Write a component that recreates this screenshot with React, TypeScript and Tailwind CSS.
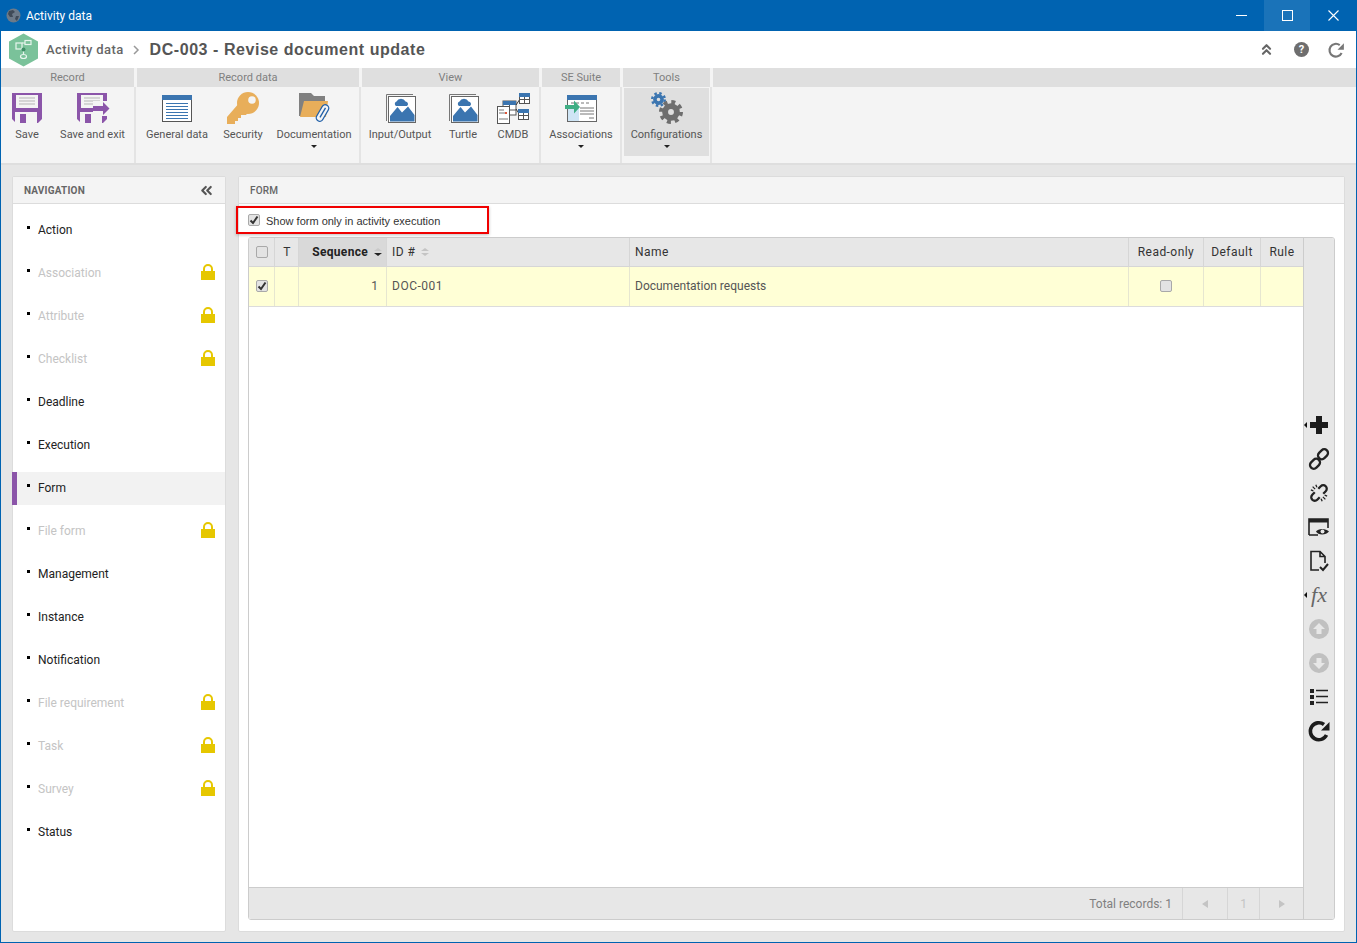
import { ChevronsLeft, ChevronsUp } from "lucide-react";
import type { ReactNode } from "react";

function SaveIcon({ exit }: { exit?: boolean }) {
  return (
    <svg width={exit ? 34 : 30} height="32" viewBox={exit ? "0 0 34 32" : "1 0 30 32"} className="block">
      <path d="M1 1H31V27L27 31H5L1 27Z" fill="#8b55a9" />
      <rect x="5" y="3" width="22" height="13" fill="#f4f4f4" />
      <path d="M8 6H24M8 9H24M8 12H24" stroke="#b5b5b5" strokeWidth="1" />
      <rect x="4" y="20" width="22" height="11" fill="#f4f4f4" />
      <rect x="9" y="22" width="6" height="9" fill="#8b55a9" />
      {exit && (
        <>
          <rect x="17" y="9" width="17" height="15" fill="#f4f4f4" />
          <path d="M17 14H27V10L33.500 16.500L27 23V19H17Z" fill="#8b55a9" />
        </>
      )}
    </svg>
  );
}

function GeneralIcon() {
  return (
    <svg width="32" height="32" viewBox="0 0 32 32" className="block">
      <rect x="1.500" y="3.500" width="29" height="26" fill="#fff" stroke="#555" />
      <rect x="1" y="3" width="30" height="5" fill="#3b75b0" />
      <path d="M5 11.500H27M5 14.500H27M5 17.500H27M5 20.500H27M5 23.500H27M5 26.500H27" stroke="#3b75b0" strokeWidth="1.200" />
    </svg>
  );
}

function KeyIcon() {
  return (
    <svg width="36" height="34" viewBox="0 0 36 34" className="block">
      <circle cx="23" cy="12" r="11" fill="#e8ae5a" />
      <path d="M15 11L2 26V33H10V30H13V27H16V24H21L24 20Z" fill="#e8ae5a" />
      <circle cx="27" cy="9" r="3.800" fill="#f4f4f4" />
    </svg>
  );
}

function DocIcon() {
  return (
    <svg width="34" height="32" viewBox="0 0 34 32" className="block">
      <path d="M2 1H14L17 4H28V9H8L4 24H2Z" fill="#808080" />
      <path d="M7 9H31L29 25H3Z" fill="#e8ae5a" />
      <g transform="rotate(30 25.500 21)" fill="#f4f4f4" stroke="#1f5fa8" strokeWidth="1.300">
        <rect x="22" y="12" width="7" height="18" rx="3.500" />
        <path d="M25.500 15V26" fill="none" />
      </g>
    </svg>
  );
}

function PictureIcon() {
  return (
    <svg width="34" height="32" viewBox="0 0 34 32" className="block">
      <path d="M3.500 29V2.500H30" fill="none" stroke="#777" />
      <rect x="5.500" y="4.500" width="27" height="26" fill="#fff" stroke="#666" />
      <path d="M7 29.500V24L14.500 15L19 20.500L25 14.500L31.500 23V29.500Z" fill="#3b75b0" />
      <path d="M13 14A2.500 2.500 0 0 1 13.500 9.500A5 5 0 0 1 22.500 9.500A2.500 2.500 0 0 1 24 14Z" fill="#3b75b0" />
    </svg>
  );
}

function CmdbIcon() {
  return (
    <svg width="34" height="34" viewBox="0 0 34 34" className="block">
      <rect x="7" y="10" width="13" height="14" fill="#fff" stroke="#555" />
      <rect x="7" y="10" width="13" height="4" fill="#3b75b0" />
      <path d="M13.500 14V24M7 19H20" stroke="#555" />
      <rect x="1.500" y="15.500" width="12" height="17" fill="#fff" stroke="#555" />
      <path d="M3 19H8M3 22H11M3 28H12" stroke="#777" />
      <rect x="9" y="21" width="2" height="2" fill="#e0573a" />
      <path d="M20 14L24 8M20 18L24 24" stroke="#333" />
      <rect x="23.500" y="2.500" width="10" height="10" fill="#fff" stroke="#555" />
      <rect x="23" y="2" width="11" height="4" fill="#3b75b0" />
      <path d="M28.500 6V12M24 8.500H33" stroke="#555" />
      <rect x="22.500" y="18.500" width="10" height="10" fill="#fff" stroke="#555" />
      <rect x="22" y="18" width="11" height="4" fill="#3b75b0" />
      <path d="M27.500 22V28M23 24.500H32" stroke="#555" />
    </svg>
  );
}

function AssocIcon() {
  return (
    <svg width="32" height="32" viewBox="0 0 32 32" className="block">
      <rect x="2.500" y="3.500" width="29" height="26" fill="#fff" stroke="#666" />
      <rect x="2" y="3" width="30" height="5" fill="#3b75b0" />
      <rect x="3" y="16" width="11" height="13" fill="#cfe5f5" />
      <path d="M6 11H9M11 11H14M16 11H19M21 11H24M15 16H29M15 19H29M15 22H29M24 26H29" stroke="#777" />
      <path d="M0 13H9V8.500L15 15L9 21.500V17H0Z" fill="#3fae84" />
    </svg>
  );
}

function Gear({ cx, cy, r, color }: { cx: number; cy: number; r: number; color: string }) {
  const circ = 2 * Math.PI * (r + 0.5);
  return (
    <g fill="none" stroke={color}>
      <circle cx={cx} cy={cy} r={r * 0.62} strokeWidth={r * 0.62} />
      <circle
        cx={cx}
        cy={cy}
        r={r + 0.5}
        strokeWidth={r * 0.42}
        strokeDasharray={`${circ / 16} ${circ / 16}`}
      />
    </g>
  );
}

function ConfigIcon() {
  return (
    <svg width="34" height="34" viewBox="0 0 34 34" className="block">
      <Gear cx={8.5} cy={8.5} r={5.8} color="#3b75b0" />
      <Gear cx={21} cy={21} r={9.5} color="#6e6e6e" />
    </svg>
  );
}

function Refresh({ size, color, width }: { size: number; color: string; width: number }) {
  return (
    <svg width={size} height={size} viewBox="0 0 24 24" className="block">
      <path d="M19.500 16A8.500 8.500 0 1 1 17 5.500" fill="none" stroke={color} strokeWidth={width} />
      <path d="M22.500 3V11.500H14Z" fill={color} />
    </svg>
  );
}

function Caret() {
  return <span className="mt-[3px] block h-0 w-0 border-x-[3px] border-t-[3px] border-x-transparent border-t-[#222]" />;
}

function RibbonBtn({
  label,
  width,
  icon,
  caret,
  active,
}: {
  label: string;
  width: string;
  icon: ReactNode;
  caret?: boolean;
  active?: boolean;
}) {
  return (
    <div className={`flex h-[68px] flex-col items-center ${width} ${active ? "bg-[#dfdfdf]" : ""}`}>
      <div className={`flex h-[34px] items-center justify-center ${active ? "mt-[3px]" : "mt-[4px]"}`}>{icon}</div>
      <span className="mt-[3px] whitespace-nowrap text-[11px] leading-[14px] text-[#555]">{label}</span>
      {caret && <Caret />}
    </div>
  );
}

function RibbonGroup({ title, width, children }: { title: string; width: string; children: ReactNode }) {
  return (
    <div className={`flex shrink-0 flex-col ${width}`}>
      <div className="mr-[3px] h-[19px] bg-[#dfdfdf] text-center text-[11px] leading-[19px] text-[#808080]">{title}</div>
      <div className="mr-[1px] flex h-[76px] border-r-2 border-[#e4e4e4]">{children}</div>
    </div>
  );
}

function Lock() {
  return (
    <svg width="14" height="16" viewBox="0 0 14 16" className="block">
      <path d="M3 8V5A4 4 0 0 1 11 5V8" fill="none" stroke="#e6c700" strokeWidth="2" />
      <rect x="0" y="7" width="14" height="9" fill="#e6c700" />
    </svg>
  );
}

const navItems: { label: string; locked?: boolean; active?: boolean }[] = [
  { label: "Action" },
  { label: "Association", locked: true },
  { label: "Attribute", locked: true },
  { label: "Checklist", locked: true },
  { label: "Deadline" },
  { label: "Execution" },
  { label: "Form", active: true },
  { label: "File form", locked: true },
  { label: "Management" },
  { label: "Instance" },
  { label: "Notification" },
  { label: "File requirement", locked: true },
  { label: "Task", locked: true },
  { label: "Survey", locked: true },
  { label: "Status" },
];

function NavRow({ label, locked, active }: { label: string; locked?: boolean; active?: boolean }) {
  return (
    <div
      className={`flex h-[33px] items-center pr-[10px] ${
        active ? "-ml-px border-l-[5px] border-[#8b55a9] bg-[#f2f2f2] pl-[10px]" : "pl-[14px]"
      }`}
    >
      <span className="mb-[6px] mr-[8px] block size-[3px] bg-black" />
      <span className={`mb-[2px] text-[12px] ${locked ? "text-[#c4c4c4]" : "text-[#222]"}`}>{label}</span>
      {locked && (
        <span className="mb-[3px] ml-auto">
          <Lock />
        </span>
      )}
    </div>
  );
}

function Check({ checked }: { checked?: boolean }) {
  return (
    <span className="flex size-[12px] items-center justify-center rounded-[2px] border border-[#a9a9a9] bg-[#e3e3e3]">
      {checked && (
        <svg width="10" height="10" viewBox="0 0 10 10">
          <path d="M1.500 5.500L4 8L8.500 1.500" fill="none" stroke="#333" strokeWidth="2" />
        </svg>
      )}
    </span>
  );
}

function SortArrows({ dark }: { dark?: boolean }) {
  return (
    <span className="ml-[6px] flex flex-col gap-[2px]">
      <span className={`block h-0 w-0 border-x-[4px] border-b-[3px] border-x-transparent ${dark ? "border-b-[#c9c9c9]" : "border-b-[#c4c4c4]"}`} />
      <span className={`block h-0 w-0 border-x-[4px] border-t-[3px] border-x-transparent ${dark ? "border-t-[#222]" : "border-t-[#c4c4c4]"}`} />
    </span>
  );
}

function ToolBtn({ children, caret }: { children: ReactNode; caret?: boolean }) {
  return (
    <div className="relative flex h-[34px] w-full items-center justify-center">
      {caret && (
        <span className="absolute left-0 top-[14px] h-0 w-0 border-y-[3px] border-r-[3px] border-y-transparent border-r-[#111]" />
      )}
      {children}
    </div>
  );
}

function Toolbar() {
  return (
    <div className="flex w-[31px] shrink-0 flex-col items-center justify-center border-l border-[#ccc] bg-[#e7e7e7] pb-[1px]">
      <ToolBtn caret>
        <svg width="20" height="20" viewBox="0 0 20 20">
          <path d="M7 1H13V7H19V13H13V19H7V13H1V7H7Z" fill="#1c1c1c" />
        </svg>
      </ToolBtn>
      <ToolBtn>
        <svg width="22" height="22" viewBox="0 0 22 22" fill="none" stroke="#222" strokeWidth="2.300">
          <rect x="9.500" y="2.500" width="11" height="7.500" rx="3.700" transform="rotate(-45 15 6.250)" />
          <rect x="1.500" y="12" width="11" height="7.500" rx="3.700" transform="rotate(-45 7 15.750)" />
        </svg>
      </ToolBtn>
      <ToolBtn>
        <svg width="22" height="22" viewBox="0 0 22 22" fill="none" stroke="#222" strokeWidth="2.300">
          <g transform="rotate(-45 11 11)">
            <path d="M13.500 7.500H17A3.500 3.500 0 0 1 17 14.500H13.500" />
            <path d="M8.500 7.500H5A3.500 3.500 0 0 0 5 14.500H8.500" />
            <path d="M11 2V5.500M7.500 3L8.500 5.500M14.500 3L13.500 5.500M11 20V16.500M7.500 19L8.500 16.500M14.500 19L13.500 16.500" strokeWidth="1.300" />
          </g>
        </svg>
      </ToolBtn>
      <ToolBtn>
        <svg width="22" height="20" viewBox="0 0 22 20" fill="none">
          <path d="M1 18V2H20V11M1 18H10" stroke="#222" strokeWidth="1.600" />
          <path d="M1 2H20V5.500H1Z" fill="#222" />
          <path d="M8 14.500C10 11 18 11 21 14.500C18 18.500 10 18.500 8 14.500Z" fill="#222" />
          <circle cx="14.500" cy="14.500" r="2" fill="#e7e7e7" />
        </svg>
      </ToolBtn>
      <ToolBtn>
        <svg width="20" height="22" viewBox="0 0 20 22" fill="none" stroke="#222" strokeWidth="1.600">
          <path d="M10 20H2V1.500H11L16 6.500V13M11 1.500V6.500H16" />
          <path d="M11 17L14 20L19 14" strokeWidth="2" />
        </svg>
      </ToolBtn>
      <ToolBtn caret>
        <span className="font-['Liberation_Serif',serif] text-[22px] italic leading-none text-[#666]">fx</span>
      </ToolBtn>
      <ToolBtn>
        <svg width="20" height="20" viewBox="0 0 20 20">
          <circle cx="10" cy="10" r="10" fill="#c0c0c0" />
          <path d="M10 4L16 10H12.500V15H7.500V10H4Z" fill="#e7e7e7" />
        </svg>
      </ToolBtn>
      <ToolBtn>
        <svg width="20" height="20" viewBox="0 0 20 20">
          <circle cx="10" cy="10" r="10" fill="#c0c0c0" />
          <path d="M10 16L16 10H12.500V5H7.500V10H4Z" fill="#e7e7e7" />
        </svg>
      </ToolBtn>
      <ToolBtn>
        <svg width="20" height="18" viewBox="0 0 20 18">
          <path d="M1 1H5V5H1ZM1 7H5V11H1ZM1 13H5V17H1Z" fill="#222" />
          <path d="M7 2.500H19M7 8.500H19M7 14.500H19" stroke="#222" strokeWidth="1.600" />
        </svg>
      </ToolBtn>
      <ToolBtn>
        <Refresh size={24} color="#1c1c1c" width={3.6} />
      </ToolBtn>
    </div>
  );
}

const headCell = "flex shrink-0 items-center border-r border-[#d6d6d6]";
const rowCell = "flex shrink-0 items-center border-r border-[#e6e6d0]";

function Grid() {
  return (
    <div className="mb-[11px] ml-[9px] mr-[9px] mt-[3px] flex min-h-0 flex-1 overflow-hidden rounded-[3px] border border-[#ccc]">
      <div className="flex min-w-0 flex-1 flex-col bg-white">
        <div className="flex h-[29px] shrink-0 border-b border-[#d6d6d6] bg-[#e7e7e7] text-[12px] tracking-[0.45px] text-[#333]">
          <div className={`${headCell} w-[26px] justify-center`}>
            <Check />
          </div>
          <div className={`${headCell} w-[24px] justify-center pl-[1px]`}>T</div>
          <div className={`${headCell} w-[88px] justify-end bg-[#d9d9d9] pr-[4px] font-bold tracking-[0.3px] text-[#222]`}>
            Sequence
            <SortArrows dark />
          </div>
          <div className={`${headCell} w-[243px] pl-[5px]`}>
            ID #
            <SortArrows />
          </div>
          <div className={`${headCell} w-[499px] pl-[5px]`}>Name</div>
          <div className={`${headCell} w-[75px] justify-center`}>Read-only</div>
          <div className={`${headCell} w-[57px] justify-center`}>Default</div>
          <div className="flex flex-1 items-center justify-center">Rule</div>
        </div>
        <div className="flex h-[40px] shrink-0 border-b border-[#dcdcdc] bg-[#ffffd6] text-[12px] text-[#555]">
          <div className={`${rowCell} w-[26px] justify-center pb-[2px]`}>
            <Check checked />
          </div>
          <div className={`${rowCell} w-[24px]`} />
          <div className={`${rowCell} w-[88px] justify-end pb-[2px] pr-[8px]`}>1</div>
          <div className={`${rowCell} w-[243px] pb-[2px] pl-[5px] tracking-[0.5px]`}>DOC-001</div>
          <div className={`${rowCell} w-[499px] pb-[2px] pl-[5px]`}>Documentation requests</div>
          <div className={`${rowCell} w-[75px] justify-center pb-[2px]`}>
            <Check />
          </div>
          <div className={`${rowCell} w-[57px]`} />
          <div className="flex-1" />
        </div>
        <div className="flex-1" />
        <div className="flex h-[32px] shrink-0 items-stretch justify-end border-t border-[#ccc] bg-[#e7e7e7] text-[12px] text-[#808080]">
          <span className="flex items-center pr-[10px]">Total records: 1</span>
          <div className="flex w-[45px] items-center justify-center border-l border-[#d6d6d6]">
            <span className="h-0 w-0 border-y-[4px] border-r-[6px] border-y-transparent border-r-[#c4c4c4]" />
          </div>
          <div className="flex w-[32px] items-center justify-center border-l border-[#d6d6d6] text-[#c4c4c4]">1</div>
          <div className="flex w-[44px] items-center justify-center border-l border-[#d6d6d6]">
            <span className="h-0 w-0 border-y-[4px] border-l-[6px] border-y-transparent border-l-[#c4c4c4]" />
          </div>
        </div>
      </div>
      <Toolbar />
    </div>
  );
}

export default function App() {
  return (
    <div className="flex h-[943px] w-[1357px] flex-col overflow-hidden border-x border-b border-[#0063b1] bg-[#e6e6e6] font-['Roboto','Liberation_Sans',sans-serif]">
      {/* title bar */}
      <div className="flex h-[31px] shrink-0 items-center bg-[#0063b1] pl-[5px] text-white">
        <svg width="15" height="15" viewBox="0 0 15 15">
          <circle cx="7.500" cy="7.500" r="7" fill="#6c7a89" />
          <path d="M3 3L7 2L9 4L6 6L7 9L4 9L2 6ZM10 8L13 8L11 13L9 11Z" fill="#3f4a57" />
        </svg>
        <span className="ml-[5px] text-[12px]">Activity data</span>
        <div className="ml-auto flex h-full">
          <div className="flex w-[45px] items-center justify-center">
            <svg width="11" height="11" viewBox="0 0 11 11" shapeRendering="crispEdges">
              <path d="M0 5.500H11" stroke="#fff" />
            </svg>
          </div>
          <div className="flex w-[46px] items-center justify-center bg-[#1a73b9]">
            <svg width="11" height="11" viewBox="0 0 11 11" shapeRendering="crispEdges">
              <rect x="0.500" y="0.500" width="10" height="10" fill="none" stroke="#fff" />
            </svg>
          </div>
          <div className="flex w-[46px] items-center justify-center">
            <svg width="11" height="11" viewBox="0 0 11 11">
              <path d="M0.500 0.500L10.500 10.500M10.500 0.500L0.500 10.500" stroke="#fff" strokeWidth="1.100" />
            </svg>
          </div>
        </div>
      </div>

      {/* breadcrumb */}
      <div className="flex h-[37px] shrink-0 items-center bg-white pl-[7px] pr-[11px]">
        <svg width="31" height="34" viewBox="0 0 31 34">
          <path d="M15.500 0.500L30 8.500V25.500L15.500 33.500L1 25.500V8.500Z" fill="#7ac29a" />
          <g fill="none" stroke="#e8f5ee" strokeWidth="1.200">
            <rect x="8" y="10" width="6" height="6" />
            <rect x="17" y="7.500" width="6" height="4" />
            <ellipse cx="15.500" cy="23.500" rx="3" ry="2" />
            <path d="M14 10H17M15.500 16V21" />
          </g>
          <circle cx="15.500" cy="16.500" r="2" fill="#3f8f68" />
        </svg>
        <span className="ml-[7px] text-[13px] font-medium tracking-[0.4px] text-[#666]">Activity data</span>
        <svg width="7" height="10" viewBox="0 0 7 10" className="ml-[9px]">
          <path d="M1 1L5 5L1 9" fill="none" stroke="#999" strokeWidth="1.500" />
        </svg>
        <span className="ml-[10px] font-['Liberation_Sans',sans-serif] text-[16px] font-bold tracking-[0.55px] text-[#555]">
          DC-003 - Revise document update
        </span>
        <div className="ml-auto flex items-center">
          <ChevronsUp size={17} strokeWidth={3} color="#666" />
          <span className="ml-[19px] flex size-[15px] items-center justify-center rounded-full bg-[#6e6e6e] text-[11px] font-bold leading-none text-white">
            ?
          </span>
          <span className="ml-[18px]">
            <Refresh size={18} color="#777" width={2.8} />
          </span>
        </div>
      </div>

      {/* ribbon */}
      <div className="flex h-[97px] shrink-0 border-b-2 border-[#dedede] bg-[#f4f4f4]">
        <RibbonGroup title="Record" width="w-[136px]">
          <RibbonBtn label="Save" width="w-[52px]" icon={<SaveIcon />} />
          <RibbonBtn label="Save and exit" width="w-[79px]" icon={<SaveIcon exit />} />
        </RibbonGroup>
        <RibbonGroup title="Record data" width="w-[225px]">
          <RibbonBtn label="General data" width="w-[80px]" icon={<GeneralIcon />} />
          <RibbonBtn label="Security" width="w-[52px]" icon={<KeyIcon />} />
          <RibbonBtn label="Documentation" width="w-[90px]" icon={<DocIcon />} caret />
        </RibbonGroup>
        <RibbonGroup title="View" width="w-[180px]">
          <RibbonBtn label="Input/Output" width="w-[76px]" icon={<PictureIcon />} />
          <RibbonBtn label="Turtle" width="w-[50px]" icon={<PictureIcon />} />
          <RibbonBtn label="CMDB" width="w-[50px]" icon={<CmdbIcon />} />
        </RibbonGroup>
        <RibbonGroup title="SE Suite" width="w-[81px]">
          <RibbonBtn label="Associations" width="w-[78px]" icon={<AssocIcon />} caret />
        </RibbonGroup>
        <RibbonGroup title="Tools" width="w-[90px]">
          <div className="pl-[1px] pt-[1px]">
            <RibbonBtn label="Configurations" width="w-[85px]" icon={<ConfigIcon />} caret active />
          </div>
        </RibbonGroup>
        <div className="h-[19px] flex-1 bg-[#dfdfdf]" />
      </div>

      {/* body */}
      <div className="flex min-h-0 flex-1 gap-[12px] pb-[10px] pl-[11px] pr-[11px] pt-[11px]">
        <div className="flex w-[214px] shrink-0 flex-col rounded-[2px] border border-[#dcdcdc] bg-white">
          <div className="flex h-[27px] shrink-0 items-center border-b border-[#dcdcdc] bg-[#f4f4f4] pl-[11px] pr-[10px]">
            <span className="text-[10px] font-bold tracking-[0.2px] text-[#666]">NAVIGATION</span>
            <ChevronsLeft size={17} strokeWidth={3} color="#555" className="ml-auto" />
          </div>
          <div className="flex flex-col gap-[10px] pt-[10px]">
            {navItems.map((item) => (
              <NavRow key={item.label} {...item} />
            ))}
          </div>
        </div>

        <div className="relative flex min-w-0 flex-1 flex-col rounded-[2px] border border-[#dcdcdc] bg-white">
          <div className="flex h-[27px] shrink-0 items-center border-b border-[#dcdcdc] bg-[#f4f4f4] pl-[11px]">
            <span className="text-[10px] font-medium tracking-[0.2px] text-[#666]">FORM</span>
          </div>
          <div className="flex h-[30px] shrink-0 items-center pl-[9px] pt-[2px]">
            <Check checked />
            <span className="ml-[6px] mt-[3px] font-['Liberation_Sans',sans-serif] text-[11px] text-[#333]">
              Show form only in activity execution
            </span>
          </div>
          <span className="absolute left-[-3px] top-[29px] h-[28px] w-[253px] border-2 border-[#f00000] shadow-[0_1px_3px_rgba(0,0,0,0.25)]" />
          <Grid />
        </div>
      </div>
    </div>
  );
}
